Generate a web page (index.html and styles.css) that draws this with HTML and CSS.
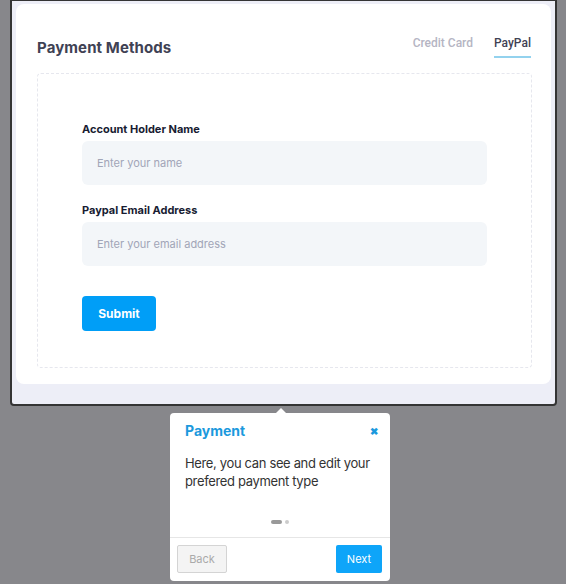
FILE: index.html
```html
<html>
<head>
<meta name="viewport" content="width=device-width, initial-scale=1">
<title>Payment Methods</title>
<link rel="stylesheet" href="styles.css">
</head>
<body>

<div class="spot">
	<div class="card">
		<div class="card-head">
			<div class="card-title">Payment Methods</div>
			<div class="tabs">
				<span class="tab">Credit Card</span>
				<span class="tab active">PayPal</span>
			</div>
		</div>

		<div class="pane">
			<label class="field-label">Account Holder Name</label>
			<div class="field">Enter your name</div>

			<label class="field-label">Paypal Email Address</label>
			<div class="field">Enter your email address</div>

			<button class="submit">Submit</button>
		</div>
	</div>
</div>

<div class="tip">
	<div class="tip-head">
		<span class="tip-title">Payment</span>
		<span class="tip-close">&#10006;</span>
	</div>
	<div class="tip-body">Here, you can see and edit your prefered payment type</div>
	<div class="dots"><span class="dot on"></span><span class="dot"></span></div>
	<div class="tip-foot">
		<button class="btn back">Back</button>
		<button class="btn next">Next</button>
	</div>
</div>

</body>
</html>
```

FILE: styles.css
```css
body {
	margin: 0;
	background: #87878b;
	font-family: Inter, "Open Sans", sans-serif;
}

.spot {
	box-sizing: border-box;
	margin-left: 10px;
	width: 547px;
	padding: 3px 4px 20px 4px;
	background: #edeef7;
	border: 2px solid #343434;
	border-top-width: 1px;
	border-radius: 0 0 4px 4px;
}

.card {
	background: #fff;
	border-radius: 8px;
	padding: 0 19px 16px 21px;
}

.card-head {
	display: flex;
	justify-content: space-between;
	align-items: flex-end;
	padding-top: 32px;
}

.card-title {
	font-size: 15px;
	font-weight: 700;
	line-height: 20px;
	color: #3f4254;
	letter-spacing: 0.1px;
}

.tabs {
	display: flex;
	gap: 21px;
	padding-right: 1px;
}

.tab {
	font-family: Roboto, sans-serif;
	font-size: 12px;
	font-weight: 500;
	line-height: 14px;
	color: #b5b5c3;
	padding: 0 0 6px 0;
	border-bottom: 2px solid transparent;
}

.tab.active {
	color: #3f4254;
	border-bottom-color: #93d2ee;
}

.pane {
	margin-top: 15px;
	border: 1px dashed #e6e7ee;
	border-radius: 4px;
	padding: 47px 44px 36px 44px;
}

.field-label {
	display: block;
	font-size: 11px;
	font-weight: 700;
	line-height: 16px;
	color: #181c32;
	margin-bottom: 4px;
}

.field {
	height: 44px;
	box-sizing: border-box;
	background: #f3f6f9;
	border-radius: 6px;
	padding: 0 15px;
	display: flex;
	align-items: center;
	font-size: 11px;
	color: #a1a5b7;
	margin-bottom: 17px;
}

.submit {
	margin-top: 13px;
	width: 74px;
	height: 35px;
	background: #009ef7;
	border: 0;
	border-radius: 4px;
	color: #fff;
	font-family: Inter, sans-serif;
	font-size: 12px;
	font-weight: 700;
}

.tip {
	position: relative;
	margin: 7px 0 0 170px;
	width: 220px;
	background: #fff;
	border-radius: 4px;
}

.tip:before {
	content: "";
	position: absolute;
	top: -5px;
	left: 106px;
	border: 5px solid transparent;
	border-top-width: 0;
	border-bottom-color: #fff;
}

.tip-head {
	display: flex;
	justify-content: space-between;
	align-items: center;
	padding: 8px 12px 0 15px;
	line-height: 20px;
}

.tip-title {
	font-size: 14px;
	font-weight: 700;
	color: #1b99dd;
}

.tip-close {
	font-size: 10px;
	font-weight: 700;
	color: #1b99dd;
}

.tip-body {
	padding: 13px 8px 0 15px;
	font-size: 13px;
	line-height: 18px;
	letter-spacing: -0.35px;
	color: #333;
}

.dots {
	display: flex;
	justify-content: center;
	gap: 3px;
	margin: 30px 0 13px 0;
}

.dot {
	width: 4px;
	height: 4px;
	border-radius: 2px;
	background: #ccc;
}

.dot.on {
	width: 11px;
	background: #999;
}

.tip-foot {
	display: flex;
	justify-content: space-between;
	border-top: 1px solid #e6e6e6;
	padding: 7px 8px 8px 7px;
}

.btn {
	height: 28px;
	font-family: Inter, sans-serif;
	font-size: 11px;
	border-radius: 2px;
}

.back {
	width: 50px;
	background: #f4f4f4;
	border: 1px solid #d4d4d4;
	color: #aaa;
}

.next {
	width: 46px;
	background: #0ea5f9;
	border: 0;
	color: #fff;
}
```
